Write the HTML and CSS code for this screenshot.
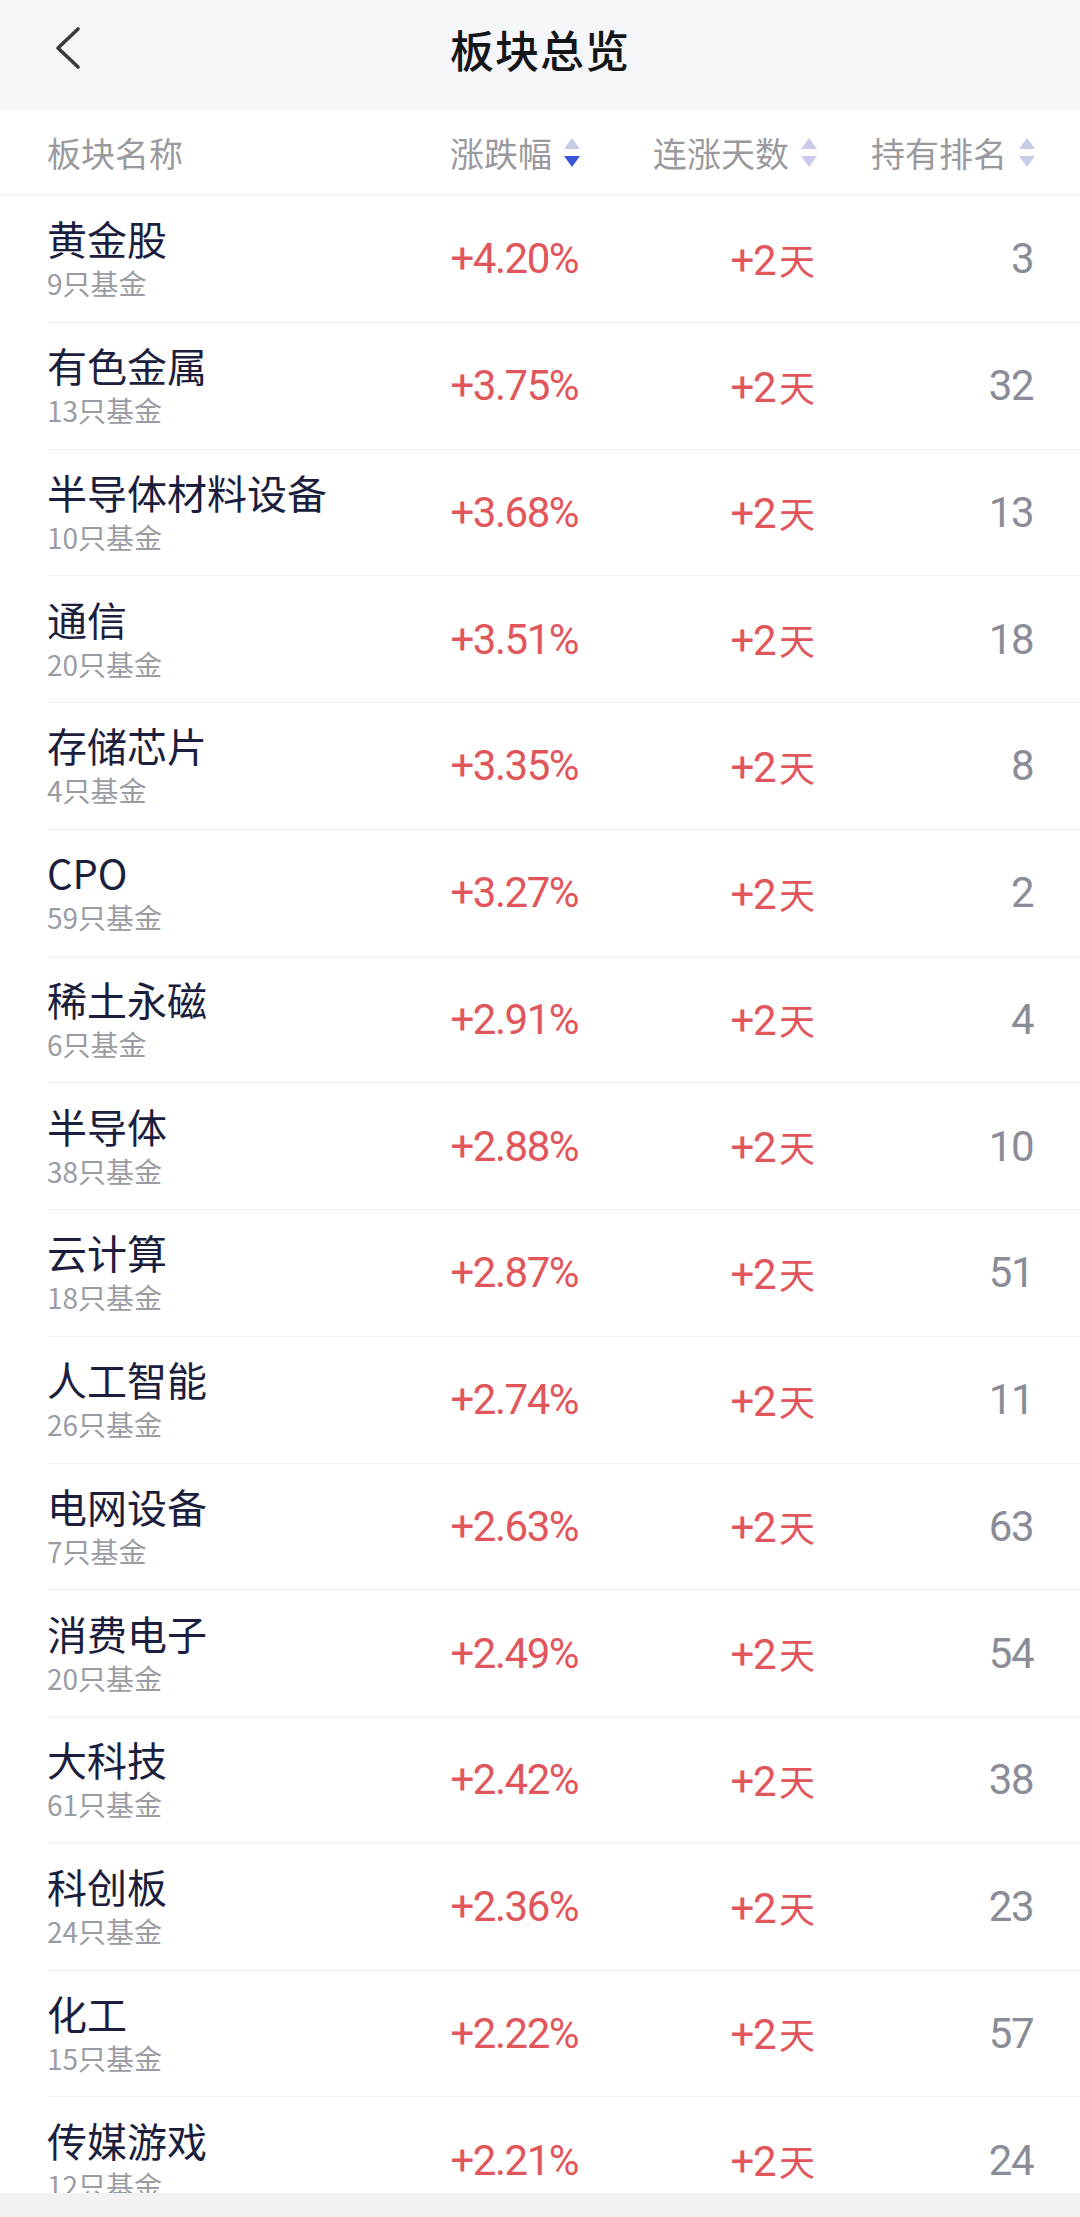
FILE: index.html
```html
<!DOCTYPE html>
<html lang="zh-CN">
<head>
    <meta charset="UTF-8">
    <meta name="viewport" content="width=device-width, initial-scale=1.0">
    <title>板块总览</title>
    <link rel="stylesheet" href="styles.css">
</head>
<body>
    <header class="topbar">
        <a class="back" href="#">
            <svg width="30" height="44" viewBox="0 0 30 44">
                <polyline points="24,3 4,22 24,41" fill="none" stroke="#3a3a3c" stroke-width="3.6" stroke-linecap="round" stroke-linejoin="round"/>
            </svg>
        </a>
        <h1>板块总览</h1>
    </header>

    <div class="thead">
        <div class="th th-name">板块名称</div>
        <div class="th">涨跌幅<span class="sort"><i class="up"></i><i class="down active"></i></span></div>
        <div class="th">连涨天数<span class="sort"><i class="up"></i><i class="down"></i></span></div>
        <div class="th">持有排名<span class="sort"><i class="up"></i><i class="down"></i></span></div>
    </div>

    <div class="list">
        <div class="row"><div class="name"><p>黄金股</p><span>9只基金</span></div><div class="pct">+4.20%</div><div class="days">+2<em>天</em></div><div class="rank">3</div></div>
        <div class="row"><div class="name"><p>有色金属</p><span>13只基金</span></div><div class="pct">+3.75%</div><div class="days">+2<em>天</em></div><div class="rank">32</div></div>
        <div class="row"><div class="name"><p>半导体材料设备</p><span>10只基金</span></div><div class="pct">+3.68%</div><div class="days">+2<em>天</em></div><div class="rank">13</div></div>
        <div class="row"><div class="name"><p>通信</p><span>20只基金</span></div><div class="pct">+3.51%</div><div class="days">+2<em>天</em></div><div class="rank">18</div></div>
        <div class="row"><div class="name"><p>存储芯片</p><span>4只基金</span></div><div class="pct">+3.35%</div><div class="days">+2<em>天</em></div><div class="rank">8</div></div>
        <div class="row"><div class="name"><p>CPO</p><span>59只基金</span></div><div class="pct">+3.27%</div><div class="days">+2<em>天</em></div><div class="rank">2</div></div>
        <div class="row"><div class="name"><p>稀土永磁</p><span>6只基金</span></div><div class="pct">+2.91%</div><div class="days">+2<em>天</em></div><div class="rank">4</div></div>
        <div class="row"><div class="name"><p>半导体</p><span>38只基金</span></div><div class="pct">+2.88%</div><div class="days">+2<em>天</em></div><div class="rank">10</div></div>
        <div class="row"><div class="name"><p>云计算</p><span>18只基金</span></div><div class="pct">+2.87%</div><div class="days">+2<em>天</em></div><div class="rank">51</div></div>
        <div class="row"><div class="name"><p>人工智能</p><span>26只基金</span></div><div class="pct">+2.74%</div><div class="days">+2<em>天</em></div><div class="rank">11</div></div>
        <div class="row"><div class="name"><p>电网设备</p><span>7只基金</span></div><div class="pct">+2.63%</div><div class="days">+2<em>天</em></div><div class="rank">63</div></div>
        <div class="row"><div class="name"><p>消费电子</p><span>20只基金</span></div><div class="pct">+2.49%</div><div class="days">+2<em>天</em></div><div class="rank">54</div></div>
        <div class="row"><div class="name"><p>大科技</p><span>61只基金</span></div><div class="pct">+2.42%</div><div class="days">+2<em>天</em></div><div class="rank">38</div></div>
        <div class="row"><div class="name"><p>科创板</p><span>24只基金</span></div><div class="pct">+2.36%</div><div class="days">+2<em>天</em></div><div class="rank">23</div></div>
        <div class="row"><div class="name"><p>化工</p><span>15只基金</span></div><div class="pct">+2.22%</div><div class="days">+2<em>天</em></div><div class="rank">57</div></div>
        <div class="row"><div class="name"><p>传媒游戏</p><span>12只基金</span></div><div class="pct">+2.21%</div><div class="days">+2<em>天</em></div><div class="rank">24</div></div>
    </div>

    <div class="bottom-bar"></div>
</body>
</html>
```

FILE: styles.css
```css
html, body {
    overflow: hidden;
}
body {
    margin: 0;
    padding: 0;
    background-color: #ffffff;
    font-family: "Noto Sans CJK SC", "Noto Sans", sans-serif;
    color: #1b1e3d;
}
.topbar {
    height: 110px;
    box-sizing: border-box;
    padding-bottom: 12px;
    background-color: #f5f6fa;
    display: flex;
    align-items: center;
    justify-content: center;
    position: relative;
}
.back {
    position: absolute;
    left: 54px;
    top: 26px;
    display: block;
    line-height: 0;
}
.topbar h1 {
    margin: 0;
    font-size: 44px;
    font-weight: 500;
    color: #151618;
    letter-spacing: 1px;
}
.thead {
    height: 86px;
    box-sizing: border-box;
    padding: 0 47px;
    border-bottom: 1px solid #f0f0f2;
    display: grid;
    grid-template-columns: 1fr 200px 237px 218px;
    align-items: center;
}
.th {
    font-size: 34px;
    color: #9a9a9e;
    display: flex;
    align-items: center;
    justify-content: flex-end;
}
.th-name {
    justify-content: flex-start;
}
.sort {
    display: flex;
    flex-direction: column;
    gap: 7px;
    margin-left: 12px;
    margin-right: -2px;
}
.sort i {
    display: block;
    width: 0;
    height: 0;
    border-left: 8.5px solid transparent;
    border-right: 8.5px solid transparent;
}
.sort .up {
    border-bottom: 11px solid #c9cce8;
}
.sort .down {
    border-top: 11px solid #c9cce8;
}
.sort .down.active {
    border-top-color: #3a56d6;
}
.row {
    height: 126.75px;
    box-sizing: border-box;
    margin-left: 47px;
    padding-right: 47px;
    border-bottom: 1px solid #f0f0f2;
    display: grid;
    grid-template-columns: 1fr 200px 237px 218px;
    align-items: center;
}
.name p {
    margin: 0;
    font-size: 40px;
    line-height: 44px;
    color: #1b1e3d;
    white-space: nowrap;
}
.name span {
    display: block;
    margin-top: 5px;
    font-size: 28px;
    line-height: 36px;
    color: #9a9ca4;
}
.pct, .days, .rank {
    text-align: right;
    font-family: Roboto, "Noto Sans CJK SC", sans-serif;
    font-size: 42px;
    letter-spacing: -1.5px;
}
.pct, .days {
    color: #e0565a;
}
.days em {
    font-style: normal;
    font-family: "Noto Sans CJK SC", sans-serif;
    font-size: 36px;
    letter-spacing: 0;
    margin-left: 4px;
}
.rank {
    color: #8a8d98;
}
.bottom-bar {
    position: fixed;
    left: 0;
    right: 0;
    bottom: 0;
    height: 24px;
    background-color: #f2f2f4;
}
```
